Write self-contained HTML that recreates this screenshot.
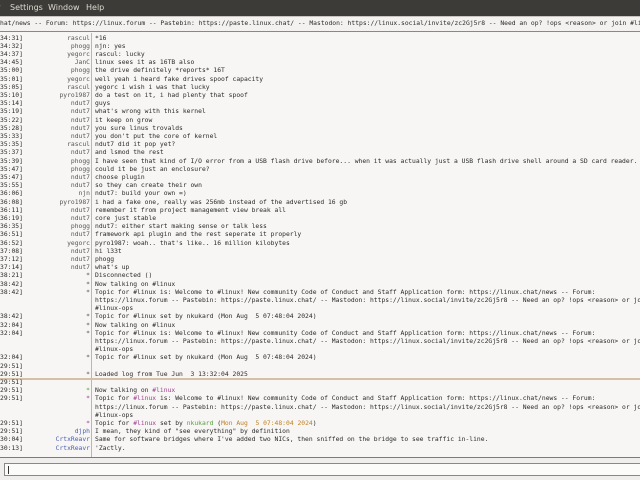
<!DOCTYPE html>
<html><head><meta charset="utf-8"><style>
html,body{margin:0;padding:0;width:640px;height:480px;overflow:hidden;background:#f6f5f4;}
#menu{position:absolute;left:0;top:0;width:640px;height:16px;background:#3c3b37;color:#dfdbd2;font:8px "DejaVu Sans","Liberation Sans",sans-serif;}
#menu span{position:absolute;top:3px;}
#topic{position:absolute;left:0;top:16px;width:640px;height:16px;background:#f3f2f0;border-top:1px solid #c8c5c0;border-bottom:1px solid #8a8884;box-sizing:border-box;}
.mono{font-family:"DejaVu Sans Mono","Liberation Mono",monospace;font-size:6.35px;white-space:pre;color:#2a2a2a;}
#topic .mono{position:absolute;left:0;top:3px;line-height:8px;}
#chat{position:absolute;left:0;top:33px;width:640px;height:424px;background:#f7f6f4;overflow:hidden;}
#vline{position:absolute;left:91px;top:0;width:1px;height:424px;background:#b9b7b3;}
.r{position:absolute;left:0;height:8.2px;line-height:8.2px;width:640px;}
.t{position:absolute;left:0;}
.n{position:absolute;right:550px;color:#555;}
.m{position:absolute;left:95px;}
.b{color:#4a5fb0!important}
.g{color:#5aa040!important}
.p{color:#a04090!important}
.o{color:#c08020}
#sep{position:absolute;left:0;top:345px;width:640px;height:1.5px;background:#d6bfa8;}
#bottom{position:absolute;left:0;top:457px;width:640px;height:23px;background:#efeeec;border-top:1.5px solid #7d7b78;box-sizing:border-box;}
#input{position:absolute;left:4px;top:5px;width:640px;height:13px;background:#fbfbfa;border:1px solid #8a8884;box-sizing:border-box;}
#caret{position:absolute;left:3px;top:2px;width:1px;height:8px;background:#333;}
</style></head><body>
<div id="menu"><span style="left:-3px">r</span><span style="left:10px">Settings</span><span style="left:48px">Window</span><span style="left:86px">Help</span></div>
<div id="topic"><div class="mono">hat/news -- Forum: https://linux.forum -- Pastebin: https://paste.linux.chat/ -- Mastodon: https://linux.social/invite/zc2Gj5r8 -- Need an op? !ops &lt;reason&gt; or join #linux-ops</div></div>
<div id="chat" class="mono">
<div id="vline"></div>
<div id="sep"></div>
<div class="r" style="top:1.6px"><span class="t">34:31]</span><span class="n">rascul</span><span class="m">*16</span></div>
<div class="r" style="top:9.8px"><span class="t">34:32]</span><span class="n">phogg</span><span class="m">njn: yes</span></div>
<div class="r" style="top:18px"><span class="t">34:37]</span><span class="n">yegorc</span><span class="m">rascul: lucky</span></div>
<div class="r" style="top:26.2px"><span class="t">34:45]</span><span class="n">JanC</span><span class="m">linux sees it as 16TB also</span></div>
<div class="r" style="top:34.4px"><span class="t">35:00]</span><span class="n">phogg</span><span class="m">the drive definitely *reports* 16T</span></div>
<div class="r" style="top:42.6px"><span class="t">35:01]</span><span class="n">yegorc</span><span class="m">well yeah i heard fake drives spoof capacity</span></div>
<div class="r" style="top:50.8px"><span class="t">35:05]</span><span class="n">rascul</span><span class="m">yegorc i wish i was that lucky</span></div>
<div class="r" style="top:59px"><span class="t">35:10]</span><span class="n">pyro1987</span><span class="m">do a test on it, i had plenty that spoof</span></div>
<div class="r" style="top:67.2px"><span class="t">35:14]</span><span class="n">ndut7</span><span class="m">guys</span></div>
<div class="r" style="top:75.4px"><span class="t">35:19]</span><span class="n">ndut7</span><span class="m">what's wrong with this kernel</span></div>
<div class="r" style="top:83.6px"><span class="t">35:22]</span><span class="n">ndut7</span><span class="m">it keep on grow</span></div>
<div class="r" style="top:91.8px"><span class="t">35:28]</span><span class="n">ndut7</span><span class="m">you sure linus trovalds</span></div>
<div class="r" style="top:100px"><span class="t">35:33]</span><span class="n">ndut7</span><span class="m">you don't put the core of kernel</span></div>
<div class="r" style="top:108.2px"><span class="t">35:35]</span><span class="n">rascul</span><span class="m">ndut7 did it pop yet?</span></div>
<div class="r" style="top:116.4px"><span class="t">35:37]</span><span class="n">ndut7</span><span class="m">and lsmod the rest</span></div>
<div class="r" style="top:124.6px"><span class="t">35:39]</span><span class="n">phogg</span><span class="m">I have seen that kind of I/O error from a USB flash drive before... when it was actually just a USB flash drive shell around a SD card reader.</span></div>
<div class="r" style="top:132.8px"><span class="t">35:47]</span><span class="n">phogg</span><span class="m">could it be just an enclosure?</span></div>
<div class="r" style="top:141px"><span class="t">35:47]</span><span class="n">ndut7</span><span class="m">choose plugin</span></div>
<div class="r" style="top:149.2px"><span class="t">35:55]</span><span class="n">ndut7</span><span class="m">so they can create their own</span></div>
<div class="r" style="top:157.4px"><span class="t">36:06]</span><span class="n">njn</span><span class="m">ndut7: build your own =)</span></div>
<div class="r" style="top:165.6px"><span class="t">36:08]</span><span class="n">pyro1987</span><span class="m">i had a fake one, really was 256mb instead of the advertised 16 gb</span></div>
<div class="r" style="top:173.8px"><span class="t">36:11]</span><span class="n">ndut7</span><span class="m">remember it from project management view break all</span></div>
<div class="r" style="top:182px"><span class="t">36:19]</span><span class="n">ndut7</span><span class="m">core just stable</span></div>
<div class="r" style="top:190.2px"><span class="t">36:35]</span><span class="n">phogg</span><span class="m">ndut7: either start making sense or talk less</span></div>
<div class="r" style="top:198.4px"><span class="t">36:51]</span><span class="n">ndut7</span><span class="m">framework api plugin and the rest seperate it properly</span></div>
<div class="r" style="top:206.6px"><span class="t">36:52]</span><span class="n">yegorc</span><span class="m">pyro1987: woah.. that's like.. 16 million kilobytes</span></div>
<div class="r" style="top:214.8px"><span class="t">37:08]</span><span class="n">ndut7</span><span class="m">hi l33t</span></div>
<div class="r" style="top:223px"><span class="t">37:12]</span><span class="n">ndut7</span><span class="m">phogg</span></div>
<div class="r" style="top:231.2px"><span class="t">37:14]</span><span class="n">ndut7</span><span class="m">what's up</span></div>
<div class="r" style="top:239.4px"><span class="t">38:21]</span><span class="n">*</span><span class="m">Disconnected ()</span></div>
<div class="r" style="top:247.6px"><span class="t">38:42]</span><span class="n">*</span><span class="m">Now talking on #linux</span></div>
<div class="r" style="top:255.8px"><span class="t">38:42]</span><span class="n">*</span><span class="m">Topic for #linux is: Welcome to #linux! New community Code of Conduct and Staff Application form: https://linux.chat/news -- Forum:</span></div>
<div class="r" style="top:264px"><span class="m">https://linux.forum -- Pastebin: https://paste.linux.chat/ -- Mastodon: https://linux.social/invite/zc2Gj5r8 -- Need an op? !ops &lt;reason&gt; or join</span></div>
<div class="r" style="top:272.2px"><span class="m">#linux-ops</span></div>
<div class="r" style="top:280.4px"><span class="t">38:42]</span><span class="n">*</span><span class="m">Topic for #linux set by nkukard (Mon Aug  5 07:48:04 2024)</span></div>
<div class="r" style="top:288.6px"><span class="t">32:04]</span><span class="n">*</span><span class="m">Now talking on #linux</span></div>
<div class="r" style="top:296.8px"><span class="t">32:04]</span><span class="n">*</span><span class="m">Topic for #linux is: Welcome to #linux! New community Code of Conduct and Staff Application form: https://linux.chat/news -- Forum:</span></div>
<div class="r" style="top:305px"><span class="m">https://linux.forum -- Pastebin: https://paste.linux.chat/ -- Mastodon: https://linux.social/invite/zc2Gj5r8 -- Need an op? !ops &lt;reason&gt; or join</span></div>
<div class="r" style="top:313.2px"><span class="m">#linux-ops</span></div>
<div class="r" style="top:321.4px"><span class="t">32:04]</span><span class="n">*</span><span class="m">Topic for #linux set by nkukard (Mon Aug  5 07:48:04 2024)</span></div>
<div class="r" style="top:329.6px"><span class="t">29:51]</span></div>
<div class="r" style="top:337.8px"><span class="t">29:51]</span><span class="n">*</span><span class="m">Loaded log from Tue Jun  3 13:32:04 2025</span></div>
<div class="r" style="top:346px"><span class="t">29:51]</span></div>
<div class="r" style="top:354.2px"><span class="t">29:51]</span><span class="n g">*</span><span class="m">Now talking on <span class="p">#linux</span></span></div>
<div class="r" style="top:362.4px"><span class="t">29:51]</span><span class="n p">*</span><span class="m">Topic for <span class="p">#linux</span> is: Welcome to #linux! New community Code of Conduct and Staff Application form: https://linux.chat/news -- Forum:</span></div>
<div class="r" style="top:370.6px"><span class="m">https://linux.forum -- Pastebin: https://paste.linux.chat/ -- Mastodon: https://linux.social/invite/zc2Gj5r8 -- Need an op? !ops &lt;reason&gt; or join</span></div>
<div class="r" style="top:378.8px"><span class="m">#linux-ops</span></div>
<div class="r" style="top:387px"><span class="t">29:51]</span><span class="n p">*</span><span class="m">Topic for <span class="p">#linux</span> set by <span class="g">nkukard</span> (<span class="o">Mon Aug  5 07:48:04 2024</span>)</span></div>
<div class="r" style="top:395.2px"><span class="t">29:51]</span><span class="n b">djph</span><span class="m">I mean, they kind of "see everything" by definition</span></div>
<div class="r" style="top:403.4px"><span class="t">30:04]</span><span class="n b">CrtxReavr</span><span class="m">Same for software bridges where I've added two NICs, then sniffed on the bridge to see traffic in-line.</span></div>
<div class="r" style="top:411.6px"><span class="t">30:13]</span><span class="n b">CrtxReavr</span><span class="m">'Zactly.</span></div>
</div>
<div id="bottom"><div id="input"><div id="caret"></div></div></div>
</body></html>
